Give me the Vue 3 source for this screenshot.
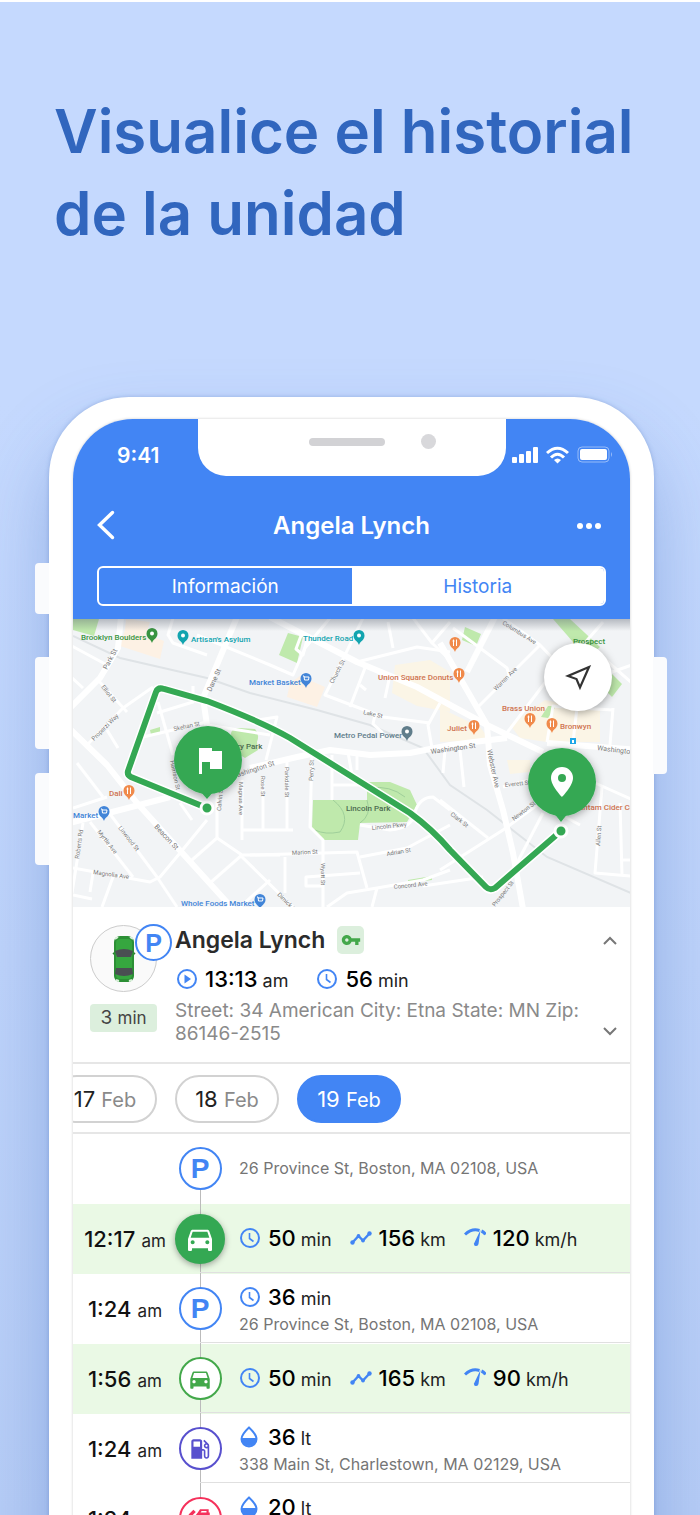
<script setup>
import { ref } from 'vue';

const tab = ref('Historia');
const tabs = ['Información', 'Historia'];

const day = ref(19);
const days = [17, 18, 19];

const events = [
  { kind: 'parking', address: '26 Province St, Boston, MA 02108, USA' },
  {
    time: '12:17', kind: 'drive', active: true,
    metrics: [
      { icon: 'clock', value: '50', unit: 'min' },
      { icon: 'track', value: '156', unit: 'km' },
      { icon: 'gauge', value: '120', unit: 'km/h' },
    ],
  },
  {
    time: '1:24', kind: 'parking', address: '26 Province St, Boston, MA 02108, USA',
    metrics: [{ icon: 'clock', value: '36', unit: 'min' }],
  },
  {
    time: '1:56', kind: 'drive',
    metrics: [
      { icon: 'clock', value: '50', unit: 'min' },
      { icon: 'track', value: '165', unit: 'km' },
      { icon: 'gauge', value: '90', unit: 'km/h' },
    ],
  },
  {
    time: '1:24', kind: 'fuel', address: '338 Main St, Charlestown, MA 02129, USA',
    metrics: [{ icon: 'drop', value: '36', unit: 'lt' }],
  },
  {
    time: '1:24', kind: 'drain', address: '338 Main St, Charlestown, MA 02129, USA',
    metrics: [{ icon: 'drop', value: '20', unit: 'lt' }],
  },
];

const parks = [
  'M73 619H99L94 636L73 630Z',
  'M313 800H367V782H390L410 790L417 805L407 822L360 823L358 840H323L312 828Z',
  'M288 633L303 637L297 663L279 655Z',
  'M465 627L481 634L476 646L462 640Z',
  'M553 619H570L600 647L592 654L573 642Z',
  'M612 674L622 684L612 697L605 690Z',
  'M541 717L548 706L556 706L548 718Z',
  'M231 733Q232 728 240 728L255 729Q260 734 257 742L258 750L245 758L232 750Z',
  'M150 730L160 727V733L151 735Z',
  'M408 880L432 876V880L408 883Z',
];

const sand = [
  'M395 665L430 660L450 672L450 712L417 706L392 693Z',
  'M440 708L480 727L490 740L440 742Z',
  'M510 725L545 700L600 710L600 742L547 742L520 738Z',
  'M507 760H530V772L510 774Z',
];

const blocks = [
  'M126 619L150 622L146 634L164 641L160 659L120 646L125 630Z',
  'M290 683L300 676L325 687L317 707L287 697Z',
];

const avenues = [
  'M121 617L118 648L100 678L70 708',
  'M70 729L107 765L137 803L233 909',
  'M237 617L203 698L207 725',
  'M270 617L357 662L417 687L487 725L543 752',
  'M440 643L460 678L487 725L490 765L503 810L513 853L523 909',
  'M70 823L170 797',
  'M495 617L467 672',
  'M250 768L297 757L330 750L370 755L410 753L450 745L490 740L507 738',
  'M547 743L640 750',
];

const streets = [
  'M70 645L107 665', 'M98 680L127 712', 'M87 745L123 708L153 687',
  'M107 730L118 748', 'M70 676L83 688', 'M143 737L207 722', 'M158 702L173 755',
  'M157 713L193 702V686', 'M173 618L168 635L173 643L207 655', 'M197 635L270 665L293 675L305 648L330 618',
  'M363 618L345 655L325 695L383 717L430 723', 'M365 668L350 707',
  'M357 662L417 647L450 652', 'M388 622L393 648', 'M413 618L432 643L450 660', 'M450 622L432 643',
  'M390 675L385 698', 'M360 685L366 690', 'M440 703L428 725L432 748', 'M375 715L373 724L382 732V738',
  'M453 628L507 668L510 678', 'M503 618L540 645L562 668', 'M540 645L477 708', 'M553 672L503 738',
  'M603 622L583 645', 'M600 655L640 690', 'M640 662L612 672', 'M577 708L573 742', 'M613 708L610 745',
  'M547 742L553 706L577 708L613 710',
  'M296 649L302 633L308 636L303 655Z', 'M258 720L277 717L266 760', 'M207 725L270 735',
  'M73 808L107 797', 'M77 763L103 797', 'M107 810L157 877L177 907', 'M90 822L133 877',
  'M73 868L150 882L160 877L180 853L207 820', 'M83 823L72 893', 'M73 895L92 899', 'M93 873L90 892',
  'M113 877L102 907', 'M180 803L192 820', 'M217 793V838L192 860', 'M217 838L242 855H280',
  'M242 855L210 883', 'M242 780V840', 'M242 830H293', 'M263 777V830', 'M270 880L240 907',
  'M287 760V830', 'M312 752L310 827L323 840V907', 'M250 855L357 852L367 888',
  'M360 857L407 848L450 825', 'M240 855L293 907', 'M285 857V893', 'M323 886H306V877L360 873',
  'M327 907L347 893L377 888L423 880L450 870', 'M377 888L372 907', 'M423 886L483 877',
  'M332 755V800', 'M333 785H363', 'M357 752V770', 'M348 752L352 775',
  'M360 825L390 830Q413 828 415 812Q420 797 433 797L450 810',
  'M440 870L503 830L540 803', 'M543 813L517 863', 'M440 800L488 838', 'M503 787L537 778',
  'M445 750L443 773', 'M460 750L464 787', 'M540 803L580 825', 'M595 783L640 803',
  'M602 787L595 873L640 877', 'M620 803L622 875', 'M620 860H640',
];

// x, y is the start of the baseline, r the rotation in degrees
const streetNames = [
  { t: 'Park St', x: 107, y: 670, r: -62, big: true }, { t: 'Dane St', x: 211, y: 692, r: -65, big: true },
  { t: 'Elliot St', x: 101, y: 687, r: 52 }, { t: 'Properzi Way', x: 94, y: 741, r: -45 },
  { t: 'Skehan St', x: 174, y: 731, r: -12 }, { t: 'Church St', x: 333, y: 684, r: -62 },
  { t: 'Lake St', x: 363, y: 714, r: 12 }, { t: 'Columbus Ave', x: 502, y: 624, r: 32 },
  { t: 'Warren Ave', x: 496, y: 691, r: -45 }, { t: 'Washington St', x: 431, y: 754, r: -8, big: true },
  { t: 'Washington', x: 597, y: 750, r: 7, big: true }, { t: 'Webster Ave', x: 487, y: 750, r: 78, big: true },
  { t: 'Beacon St', x: 154, y: 827, r: 47, big: true }, { t: 'Linwood St', x: 118, y: 828, r: 52 },
  { t: 'Myrtle Ave', x: 97, y: 832, r: 52 }, { t: 'Magnolia Ave', x: 93, y: 874, r: 8 },
  { t: 'Roberts Rd', x: 79, y: 859, r: -82 }, { t: 'Calvin St', x: 221, y: 811, r: -85 },
  { t: 'Magnus Ave', x: 239, y: 782, r: 90 }, { t: 'Rose St', x: 261, y: 776, r: 90 },
  { t: 'Parkdale St', x: 285, y: 767, r: 90 }, { t: 'Perry St', x: 313, y: 781, r: -88 },
  { t: 'Washington St', x: 232, y: 779, r: -18, big: true }, { t: 'Harrison St', x: 170, y: 761, r: 78 },
  { t: 'Marion St', x: 292, y: 855, r: -3 }, { t: 'Wyatt St', x: 321, y: 863, r: 90 },
  { t: 'Adrian St', x: 387, y: 856, r: -10 }, { t: 'Lincoln Pkwy', x: 372, y: 830, r: -6 },
  { t: 'Concord Ave', x: 394, y: 889, r: -6 }, { t: 'Dimick St', x: 277, y: 895, r: 45 },
  { t: 'Clark St', x: 450, y: 815, r: 38 }, { t: 'Newton St', x: 514, y: 821, r: -38 },
  { t: 'Everett St', x: 505, y: 787, r: -6 }, { t: 'Allen St', x: 600, y: 846, r: -86 },
  { t: 'Prospect St', x: 495, y: 907, r: -52 },
];

const places = [
  { t: 'Brooklyn Boulders', x: 81, y: 640, c: 'green', pin: [152, 635] },
  { t: "Artisan's Asylum", x: 191, y: 642, c: 'teal', pin: [183, 637] },
  { t: 'Thunder Road', x: 303, y: 641, c: 'teal', pin: [359, 637] },
  { t: 'Market Basket', x: 249, y: 685, c: 'blue', pin: [306, 680] },
  { t: 'Union Square Donuts', x: 378, y: 680, c: 'orange', pin: [459, 675] },
  { t: '', x: 0, y: 0, c: 'orange', pin: [455, 644] },
  { t: 'Metro Pedal Power', x: 334, y: 738, c: 'slate', pin: [407, 733] },
  { t: 'Brass Union', x: 502, y: 711, c: 'orange', pin: [530, 720] },
  { t: 'Bronwyn', x: 560, y: 729, c: 'orange', pin: [552, 725] },
  { t: 'Juliet', x: 447, y: 731, c: 'orange', pin: [474, 727] },
  { t: 'Dali', x: 109, y: 796, c: 'orange', pin: [129, 792] },
  { t: 'Market', x: 73, y: 818, c: 'blue', pin: [104, 813] },
  { t: 'Whole Foods Market', x: 181, y: 906, c: 'blue', pin: [260, 901] },
  { t: 'Bantam Cider Co', x: 574, y: 810, c: 'orange' },
  { t: 'Prospect', x: 573, y: 644, c: 'green' },
  { t: 'Perry Park', x: 225, y: 749, c: 'park' },
  { t: 'Lincoln Park', x: 346, y: 811, c: 'park' },
];
</script>

<template>
  <svg class="sprite" aria-hidden="true">
    <symbol id="clock" viewBox="0 0 22 22">
      <circle cx="11" cy="11" r="9" fill="none" stroke="currentColor" stroke-width="2" />
      <path d="M10.500 6V11.500L14.500 14.500" fill="none" stroke="currentColor" stroke-width="1.600" />
    </symbol>
    <symbol id="play" viewBox="0 0 22 22">
      <circle cx="11" cy="11" r="9" fill="none" stroke="currentColor" stroke-width="2" />
      <path d="M8.500 6.500L15 11L8.500 15.500Z" fill="currentColor" />
    </symbol>
    <symbol id="track" viewBox="0 0 22 22">
      <path d="M2.500 15.500L8.500 9L13 13.500L19.500 6.500" fill="none" stroke="currentColor" stroke-width="2.400" />
      <g fill="currentColor">
        <circle cx="2.500" cy="15.500" r="2.200" /><circle cx="8.500" cy="9" r="1.900" />
        <circle cx="13" cy="13.500" r="1.900" /><circle cx="19.500" cy="6.500" r="2.200" />
      </g>
    </symbol>
    <symbol id="gauge" viewBox="0 0 22 22">
      <path d="M1 7.500Q8 1 15.500 3.500" fill="none" stroke="currentColor" stroke-width="3" />
      <path d="M17.500 4Q20 5 21.500 7.500" fill="none" stroke="currentColor" stroke-width="3" />
      <path d="M16.500 3L14.500 17Q14 19.500 11.500 19Q9.500 18.500 10 16.500Z" fill="currentColor" />
    </symbol>
    <symbol id="drop" viewBox="0 0 22 22">
      <path d="M10 1.500C10 1.500 2.500 8.500 2.500 13a7.500 7.500 0 0 0 15 0C17.500 8.500 10 1.500 10 1.500Z" fill="none" stroke="currentColor" stroke-width="2" />
      <path d="M2.500 12H17.500a7.500 8 0 0 1-15 0Z" fill="currentColor" />
    </symbol>
    <symbol id="car" viewBox="0 0 24 24">
      <path fill="currentColor" d="M18.920 6.010C18.720 5.420 18.160 5 17.500 5h-11c-.66 0-1.210.42-1.420 1.010L3 12v8c0 .55.45 1 1 1h1c.55 0 1-.45 1-1v-1h12v1c0 .55.45 1 1 1h1c.55 0 1-.45 1-1v-8l-2.080-5.990zM6.500 16c-.83 0-1.500-.67-1.500-1.500S5.670 13 6.500 13s1.500.67 1.500 1.500S7.330 16 6.500 16zm11 0c-.83 0-1.500-.67-1.500-1.500s.67-1.500 1.500-1.500 1.500.67 1.500 1.500-.67 1.500-1.500 1.500zM5 11l1.500-4.500h11L19 11H5z" />
    </symbol>
    <symbol id="fuel" viewBox="0 0 24 24">
      <path fill="currentColor" d="M19.770 7.230l.01-.01-3.720-3.720L15 4.560l2.110 2.110c-.94.36-1.610 1.260-1.610 2.330 0 1.380 1.120 2.500 2.500 2.500.36 0 .69-.08 1-.21v7.210c0 .55-.45 1-1 1s-1-.45-1-1V14c0-1.100-.9-2-2-2h-1V5c0-1.100-.9-2-2-2H6c-1.100 0-2 .9-2 2v16h10v-7.500h1.500v5c0 1.380 1.120 2.500 2.500 2.500s2.500-1.120 2.500-2.500V9c0-.69-.28-1.320-.73-1.770zM12 10H6V5h6v5zm6 0c-.55 0-1-.45-1-1s.45-1 1-1 1 .45 1 1-.45 1-1 1z" />
    </symbol>
    <symbol id="drain" viewBox="0 0 24 24">
      <path fill="currentColor" d="M10 6l2-3h8v3h1v15H6V11l4-5zM13.500 4.500L12.500 6H18V4.500z" />
      <path d="M2.500 9L7 4.500" stroke="currentColor" stroke-width="3" />
    </symbol>
    <symbol id="key" viewBox="0 0 24 24">
      <path fill="currentColor" d="M12.650 10C11.830 7.670 9.610 6 7 6c-3.310 0-6 2.690-6 6s2.690 6 6 6c2.610 0 4.830-1.670 5.650-4H17v4h4v-4h2v-4H12.650zM7 14c-1.100 0-2-.9-2-2s.9-2 2-2 2 .9 2 2-.9 2-2 2z" />
    </symbol>
  </svg>

  <main class="page">
    <h1>Visualice el historial<br>de la unidad</h1>

    <div class="phone">
      <i class="side mute"></i>
      <i class="side vol-up"></i>
      <i class="side vol-down"></i>
      <i class="side power"></i>

      <div class="screen">
        <header>
          <div class="notch">
            <span class="speaker"></span>
            <span class="camera"></span>
          </div>
          <div class="status">
            <span>9:41</span>
            <svg width="100" height="18" viewBox="0 0 100 18" fill="#fff">
              <rect x="0" y="11" width="5" height="6" rx="1" />
              <rect x="7" y="8" width="5" height="9" rx="1" />
              <rect x="14" y="5" width="5" height="12" rx="1" />
              <rect x="21" y="1" width="5" height="16" rx="1" />
              <g fill="none" stroke="#fff" stroke-width="3">
                <path d="M35 7Q45.500 -2.500 56 7" />
                <path d="M39 11.500Q45.500 5 52 11.500" />
              </g>
              <path d="M42 14Q45.500 11 49 14L45.500 17.500Z" />
              <rect x="66" y="1" width="31" height="15" rx="4" fill="none" stroke="#fff" stroke-opacity=".45" />
              <rect x="68" y="3" width="27" height="11" rx="2" />
              <path d="M99 6Q101 8.500 99 11Z" fill-opacity=".45" />
            </svg>
          </div>
          <div class="title-bar">
            <button class="icon-button" aria-label="Atrás">
              <svg width="20" height="30" viewBox="0 0 20 30">
                <path d="M15.500 2.500L2.500 15L15.500 27.500" fill="none" stroke="#fff" stroke-width="3.400" stroke-linecap="round" />
              </svg>
            </button>
            <span class="title">Angela Lynch</span>
            <button class="icon-button" aria-label="Más">
              <svg width="26" height="8" viewBox="0 0 26 8" fill="#fff">
                <circle cx="4" cy="5" r="3" /><circle cx="13" cy="5" r="3" /><circle cx="22" cy="5" r="3" />
              </svg>
            </button>
          </div>
          <div class="tabs">
            <button v-for="name in tabs" :key="name" :class="{ active: tab === name }" @click="tab = name">{{ name }}</button>
          </div>
        </header>

        <section class="map">
          <svg class="map-canvas" viewBox="73 619 557 288" preserveAspectRatio="xMidYMid slice">
            <defs>
              <linearGradient id="top-shade" x1="0" y1="0" x2="0" y2="1">
                <stop offset="0" stop-color="#5a6270" stop-opacity=".4" />
                <stop offset="1" stop-color="#5a6270" stop-opacity="0" />
              </linearGradient>
              <filter id="soft" x="-50%" y="-50%" width="200%" height="200%">
                <feDropShadow dx="0" dy="2" stdDeviation="4" flood-opacity=".35" />
              </filter>
            </defs>
            <rect x="73" y="619" width="557" height="288" fill="#f2f4f6" />
            <path v-for="d in sand" :key="d" :d="d" fill="#fbf5e6" />
            <path v-for="d in blocks" :key="d" :d="d" fill="#fdf1e4" />
            <path v-for="d in parks" :key="d" :d="d" fill="#bfe9ac" />
            <path d="M333 800Q352 815 340 832Q325 835 315 830M367 800Q372 815 360 823M370 788Q390 785 405 797" fill="none" stroke="#9fcf9a" />
            <path d="M73 636L120 658L207 678L250 693L317 710L370 725L423 748L450 785L487 810L547 857L640 897" fill="none" stroke="#dfe3e6" stroke-width="2" />
            <g class="roads">
              <path v-for="d in streets" :key="d" :d="d" />
            </g>
            <g class="roads wide">
              <path v-for="d in avenues" :key="d" :d="d" />
            </g>
            <text
              v-for="s in streetNames" :key="s.t + s.x" class="street" :class="{ big: s.big }"
              :transform="`translate(${s.x} ${s.y}) rotate(${s.r})`"
            >{{ s.t }}</text>

            <g v-for="p in places" :key="p.t + p.x" :class="p.c">
              <text v-if="p.t" class="place" :x="p.x" :y="p.y">{{ p.t }}</text>
              <g v-if="p.pin" :transform="`translate(${p.pin[0]} ${p.pin[1]})`">
                <path d="M0 8C-1 4 -5.500 3.500 -5.500 -1.500A5.500 5.500 0 0 1 5.500 -1.500C5.500 3.500 1 4 0 8Z" />
                <path v-if="p.c === 'orange'" d="M-1.500 -4.500V2M1.500 -4.500V2M-2.500 -3H-0.500" stroke="#fff" fill="none" />
                <path v-else-if="p.c === 'blue'" d="M-3 -4H-2L-1.500 0H2.500L3 -3H-2" stroke="#fff" fill="none" />
                <circle v-else cy="-1.500" r="2" fill="#fff" />
              </g>
            </g>
            <rect x="570" y="738" width="6" height="6" fill="#1ea7e8" />
            <path d="M572 740H574V743H572Z" fill="#fff" />

            <rect x="73" y="619" width="557" height="12" fill="url(#top-shade)" />

            <g class="route">
              <path d="M207 808L131 777Q127 775 128 771L156 692Q158 687 164 689L207 701Q262 722 290 738L410 813Q432 829 450 850L486 887Q490 891 495 888L561 831" />
              <path d="M207 808L131 777Q127 775 128 771L156 692Q158 687 164 689L207 701Q262 722 290 738L410 813Q432 829 450 850L486 887Q490 891 495 888L561 831" />
            </g>
            <circle cx="207" cy="808" r="6" class="stop" />
            <circle cx="561" cy="831" r="6" class="stop" />

            <g filter="url(#soft)" fill="#34a853">
              <path d="M199 790L207 799L215 790Z" />
              <circle cx="208" cy="760" r="34" />
              <path d="M553 812L561 822L569 812Z" />
              <circle cx="562" cy="782" r="34" />
            </g>
            <path d="M199 748H212V751H222V769H210V766H202V774H199Z" fill="#fff" />
            <path d="M202 766V762H210V766Z" fill="#34a853" />
            <path d="M562 767a11 11 0 0 0-11 11c0 8 11 19 11 19s11-11 11-19a11 11 0 0 0-11-11zm0 7a4 4 0 0 1 0 8a4 4 0 0 1 0-8z" fill="#fff" />
          </svg>
          <button class="locate" aria-label="Mi ubicación">
            <svg width="28" height="28" viewBox="0 0 28 28">
              <path d="M25 4L4 13L12.500 16L16 24.500Z" fill="none" stroke="#333" stroke-width="2.200" />
            </svg>
          </button>
        </section>

        <section class="unit">
          <div class="unit-side">
            <div class="avatar">
              <svg width="24" height="48" viewBox="0 0 24 48">
                <path d="M1 19L4 17M23 19L20 17" stroke="#2b7a31" stroke-width="2" />
                <rect x="2" y="1" width="20" height="46" rx="6" fill="#2c8f35" />
                <rect x="4" y="4" width="16" height="40" rx="4" fill="#36a73f" />
                <path d="M3 16Q12 12 21 16L19 22H5Z" fill="#4a4f52" />
                <path d="M4 33H20L21 39Q12 43 3 39Z" fill="#4a4f52" />
                <path d="M3 4L6 2M21 4L18 2M4 45L7 46M20 45L17 46" stroke="#d9f0da" stroke-width="2" />
              </svg>
              <span class="avatar-badge">P</span>
            </div>
            <span class="ago">3 <small>min</small></span>
          </div>
          <div class="unit-info">
            <h2>Angela Lynch <span class="key"><svg width="20" height="20"><use href="#key" /></svg></span></h2>
            <div class="metrics">
              <span class="metric"><svg><use href="#play" /></svg><b>13:13</b> <small>am</small></span>
              <span class="metric"><svg><use href="#clock" /></svg><b>56</b> <small>min</small></span>
            </div>
            <p>Street: 34 American City: Etna State: MN Zip: 86146-2515</p>
          </div>
          <div class="steps">
            <button class="icon-button" aria-label="Anterior">
              <svg width="14" height="10" viewBox="0 0 14 10"><path d="M1 8L7 2L13 8" fill="none" stroke="#777" stroke-width="2" /></svg>
            </button>
            <button class="icon-button" aria-label="Siguiente">
              <svg width="14" height="10" viewBox="0 0 14 10"><path d="M1 2L7 8L13 2" fill="none" stroke="#777" stroke-width="2" /></svg>
            </button>
          </div>
        </section>

        <nav class="days">
          <button v-for="d in days" :key="d" :class="{ active: day === d }" @click="day = d">{{ d }} <small>Feb</small></button>
        </nav>

        <ul class="events">
          <li v-for="(e, idx) in events" :key="idx" :class="{ drive: e.kind === 'drive' }">
            <div class="time"><template v-if="e.time"><b>{{ e.time }}</b> <small>am</small></template></div>
            <div class="rail">
              <span class="badge" :class="[e.kind, { active: e.active }]">
                <template v-if="e.kind === 'parking'">P</template>
                <svg v-else-if="e.kind === 'drive'"><use href="#car" /></svg>
                <svg v-else><use :href="'#' + e.kind" /></svg>
              </span>
            </div>
            <div class="details" :class="{ double: e.metrics && e.address }">
              <div v-if="e.metrics" class="metrics">
                <span v-for="m in e.metrics" :key="m.icon" class="metric">
                  <svg><use :href="'#' + m.icon" /></svg><b>{{ m.value }}</b> <small>{{ m.unit }}</small>
                </span>
              </div>
              <div v-if="e.address" class="address">{{ e.address }}</div>
            </div>
          </li>
        </ul>
      </div>
    </div>
  </main>
</template>

<style>
body {
  margin: 0;
}
</style>

<style scoped>
* {
  box-sizing: border-box;
}
button {
  font: inherit;
  border: none;
  background: none;
  padding: 0;
  cursor: pointer;
}
small {
  font-size: 18px;
}
b {
  font-weight: 500;
}
.sprite {
  position: absolute;
  width: 0;
  height: 0;
}
.page {
  height: 100vh;
  overflow: hidden;
  border-top: 2px solid #fff;
  background: linear-gradient(#c5d9fe, #c5d9fe 400px, #b7cdf6);
  font-family: Inter, 'Liberation Sans', sans-serif;
  color: #111;
}
h1 {
  margin: 0;
  padding: 88px 20px 0 54px;
  height: 395px;
  font-size: 60px;
  line-height: 82px;
  font-weight: 600;
  color: #3166be;
}

/* device */
.phone {
  position: relative;
  margin: 0 46px 0 49px;
  padding: 22px 24px 0;
  border-radius: 80px 80px 0 0;
  background: #fff;
  box-shadow: 0 0 4px rgba(70, 110, 180, .35), 0 40px 70px rgba(60, 105, 190, .35);
}
.side {
  position: absolute;
  width: 14px;
  left: -14px;
  border-radius: 4px 0 0 4px;
  background: #fafbfd;
}
.mute {
  top: 166px;
  height: 51px;
}
.vol-up {
  top: 260px;
  height: 92px;
}
.vol-down {
  top: 376px;
  height: 92px;
}
.power {
  top: 260px;
  left: auto;
  right: -13px;
  height: 117px;
  border-radius: 0 4px 4px 0;
}
.screen {
  border-radius: 60px 60px 0 0;
  overflow: hidden;
  box-shadow: 0 0 3px rgba(0, 0, 0, .2);
  background: #fff;
}

/* header */
header {
  position: relative;
  height: 200px;
  padding: 23px 24px 0;
  background: #4285f4;
  color: #fff;
}
.notch {
  position: absolute;
  top: -2px;
  left: 50%;
  width: 308px;
  height: 59px;
  margin-left: -154px;
  display: flex;
  align-items: center;
  justify-content: flex-end;
  gap: 36px;
  padding: 0 70px 10px 0;
  border-radius: 0 0 28px 28px;
  background: #fff;
}
.speaker {
  width: 76px;
  height: 8px;
  border-radius: 4px;
  background: #d2d2d5;
}
.camera {
  width: 15px;
  height: 15px;
  border-radius: 50%;
  background: #d8d8db;
}
.status {
  display: flex;
  justify-content: space-between;
  align-items: center;
  height: 26px;
  margin: 0 -6px 0 20px;
  font-size: 21px;
  font-weight: 600;
}
.title-bar {
  display: grid;
  grid-template-columns: 1fr auto 1fr;
  align-items: center;
  height: 34px;
  margin: 40px 4px 24px 0;
}
.title-bar .icon-button:last-child {
  justify-self: end;
}
.title {
  padding-left: 4px;
  font-size: 24px;
  font-weight: 600;
}
.icon-button {
  display: flex;
}
.tabs {
  display: flex;
  height: 40px;
  border: 2px solid #fff;
  border-radius: 6px;
  overflow: hidden;
}
.tabs button {
  flex: 1;
  font-size: 19px;
  color: #fff;
}
.tabs button.active {
  background: #fff;
  color: #4285f4;
}

/* map */
.map {
  position: relative;
  height: 288px;
}
.map-canvas {
  display: block;
  width: 100%;
  height: 100%;
  font-family: Roboto, sans-serif;
}
.roads {
  fill: none;
  stroke: #fff;
  stroke-width: 3px;
  stroke-linejoin: round;
}
.roads.wide {
  stroke-width: 6px;
}
.street {
  font-size: 6px;
  fill: #777;
}
.street.big {
  font-size: 7px;
}
.place {
  font-size: 8px;
  font-weight: 500;
}
.green {
  fill: #389440;
}
.teal {
  fill: #12a4af;
}
.blue {
  fill: #4285d8;
}
.orange {
  fill: #f08a4b;
}
.orange .place {
  fill: #cf7350;
}
.slate {
  fill: #607d8b;
}
.park {
  fill: #4c6b50;
}
.route {
  fill: none;
  stroke: #34a853;
  stroke-width: 6px;
  stroke-linecap: round;
}
.route path:first-child {
  stroke: #fff;
  stroke-width: 9px;
}
.stop {
  fill: #34a853;
  stroke: #fff;
  stroke-width: 3px;
}
.locate {
  position: absolute;
  top: 24px;
  right: 18px;
  width: 68px;
  height: 68px;
  display: flex;
  align-items: center;
  justify-content: center;
  border-radius: 50%;
  background: #fff;
  box-shadow: 0 2px 8px rgba(0, 0, 0, .35);
}

/* unit summary */
.unit {
  display: flex;
  gap: 18px;
  padding: 18px 13px 17px 17px;
  border-bottom: 2px solid #e6e6e6;
}
.unit-side {
  width: 67px;
}
.avatar {
  position: relative;
  width: 67px;
  height: 67px;
  display: flex;
  align-items: center;
  justify-content: center;
  border: 1px solid #ccc;
  border-radius: 50%;
  background: #fafafa;
}
.avatar-badge {
  position: absolute;
  top: -2px;
  right: -16px;
  width: 37px;
  height: 37px;
  border: 2px solid #4285f4;
  border-radius: 50%;
  background: #fff;
  color: #4285f4;
  font: 700 25px/34px 'Liberation Sans', sans-serif;
  text-align: center;
}
.ago {
  display: block;
  height: 28px;
  margin-top: 12px;
  border-radius: 4px;
  background: #dcefdd;
  color: #444;
  font-size: 19px;
  line-height: 28px;
  text-align: center;
}
.ago small {
  font-size: 17px;
}
.unit-info {
  flex: 1;
}
h2 {
  display: flex;
  align-items: center;
  gap: 12px;
  margin: 0;
  height: 30px;
  font-size: 23px;
  font-weight: 600;
  color: #2b2b2b;
}
.key {
  display: flex;
  align-items: center;
  justify-content: center;
  width: 27px;
  height: 28px;
  border-radius: 5px;
  background: #dcefdd;
  color: #43a84a;
}
.unit .metrics {
  gap: 27px;
  margin: 10px 0 6px;
}
.unit .metrics svg {
  margin-left: 1px;
}
p {
  margin: 0;
  font-size: 19px;
  line-height: 23px;
  color: #8a8a8a;
}
.steps {
  display: flex;
  flex-direction: column;
  justify-content: space-between;
  padding: 11px 0 9px;
}

/* shared value + unit */
.metrics {
  display: flex;
  gap: 18px;
  height: 28px;
}
.metric {
  display: flex;
  align-items: baseline;
  font-size: 22px;
  line-height: 28px;
  white-space: pre;
  color: #000;
}
.metric svg {
  align-self: center;
  width: 22px;
  height: 22px;
  margin-right: 7px;
  color: #4285f4;
}
.metric small {
  margin-left: 5px;
  color: #222;
}

/* days */
.days {
  display: flex;
  gap: 18px;
  height: 70px;
  padding-top: 11px;
  border-bottom: 2px solid #e6e6e6;
}
.days button {
  flex: none;
  width: 104px;
  height: 48px;
  border: 2px solid #d2d2d2;
  border-radius: 24px;
  font-size: 22px;
  color: #222;
}
.days button:first-child {
  margin-left: -20px;
}
.days small {
  font-size: 20px;
  color: #8a8a8a;
}
.days button.active {
  border-color: #4285f4;
  background: #4285f4;
  color: #fff;
}
.days .active small {
  color: #fff;
}

/* timeline */
.events {
  margin: 0;
  padding: 0;
  list-style: none;
}
li {
  display: grid;
  grid-template-columns: 104px 46px 1fr;
  height: 70px;
  padding-bottom: 1px;
}
li.drive {
  background: #eaf9e5;
}
.time {
  align-self: center;
  text-align: center;
  font-size: 22px;
  white-space: nowrap;
}
.time small {
  font-size: 17px;
  color: #222;
}
.rail {
  display: flex;
  align-items: center;
  justify-content: center;
  margin-bottom: -1px;
  padding-bottom: 1px;
  background: linear-gradient(#bbb, #bbb) center / 1px 100% no-repeat;
}
li:first-child .rail {
  background-size: 1px 50%;
  background-position: center bottom;
}
.badge {
  flex: none;
  display: flex;
  align-items: center;
  justify-content: center;
  width: 43px;
  height: 43px;
  border: 2px solid currentColor;
  border-radius: 50%;
  background: #fff;
  font: 700 28px/39px 'Liberation Sans', sans-serif;
}
.badge svg {
  width: 26px;
  height: 26px;
}
.badge.parking {
  color: #4285f4;
}
.badge.drive {
  color: #43a84a;
}
.badge.fuel {
  color: #5850ce;
}
.badge.drain {
  color: #f5315b;
}
.badge.active {
  width: 50px;
  height: 50px;
  border-color: #34a853;
  background: #34a853;
  color: #fff;
  box-shadow: 0 2px 6px rgba(0, 0, 0, .35);
}
.badge.active svg {
  width: 32px;
  height: 32px;
}
.details {
  display: flex;
  flex-direction: column;
  justify-content: center;
  margin-left: -23px;
  padding-left: 39px;
  border-bottom: 1px solid #e0e0e0;
}
.details.double {
  padding-top: 4px;
}
li:first-child .details {
  border-color: transparent;
}
.address {
  font-size: 16px;
  line-height: 26px;
  color: #757575;
}
</style>
